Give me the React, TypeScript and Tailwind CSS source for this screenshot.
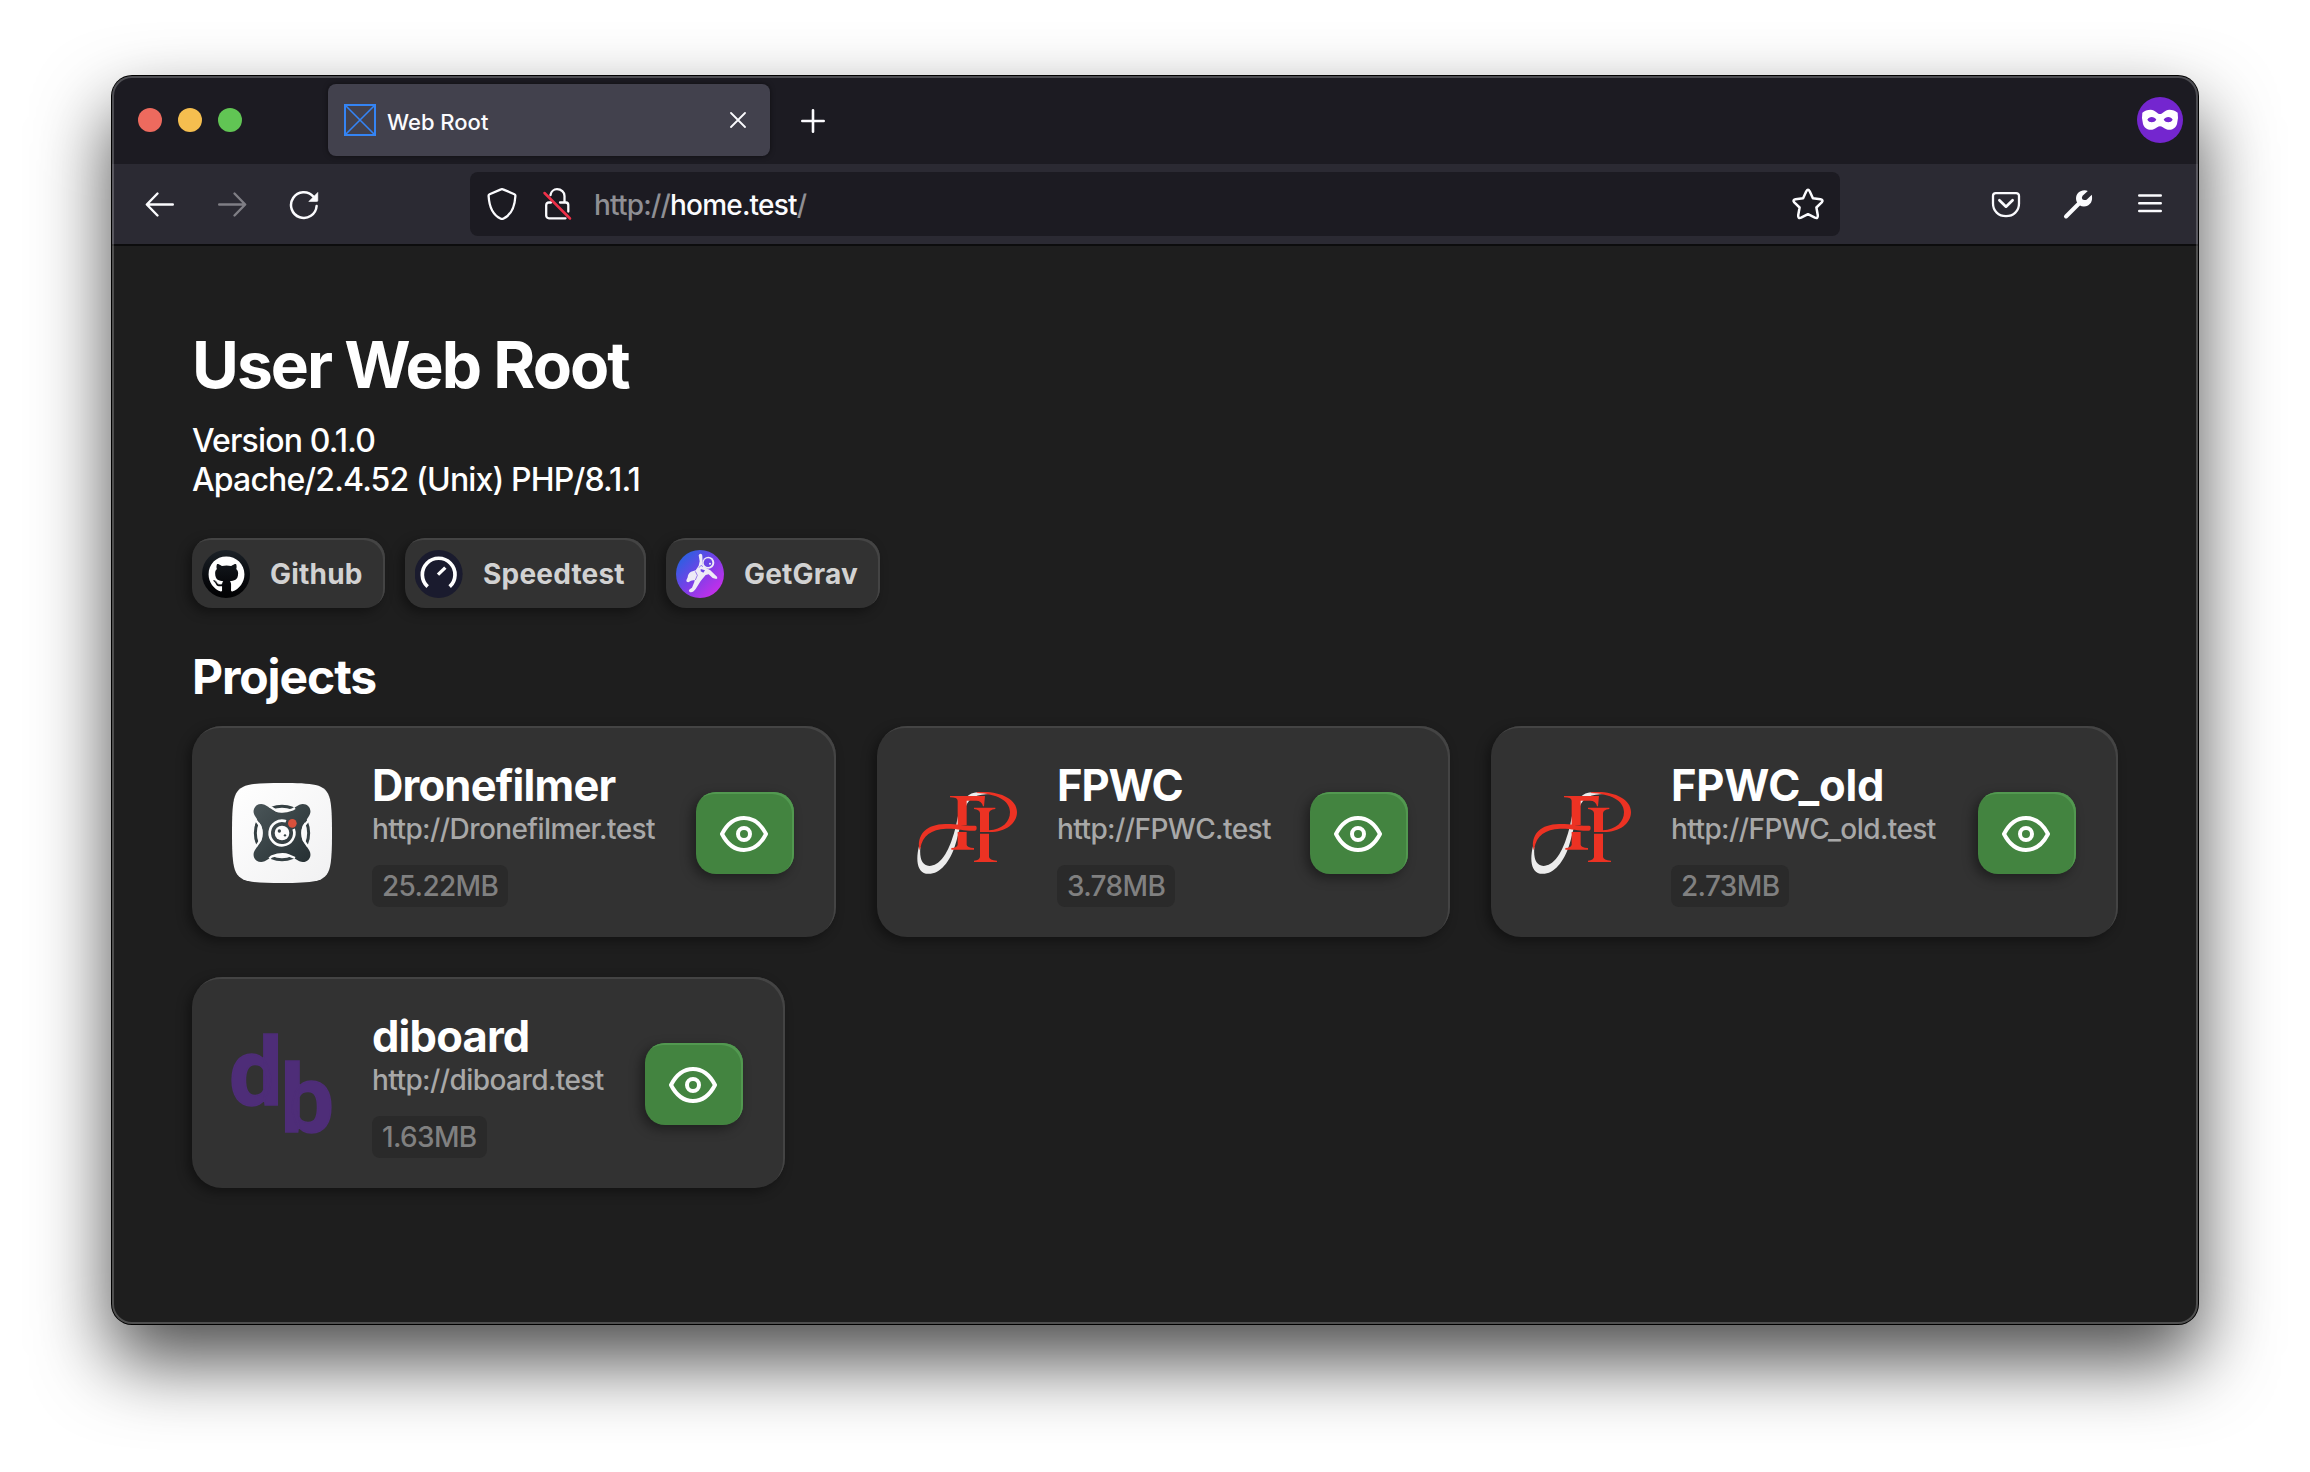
import React from "react";
import { FaGithub } from "react-icons/fa";

function BackIcon({ className = "" }: { className?: string }) {
  return (
    <svg className={className} width="32" height="32" viewBox="0 0 32 32" fill="none" stroke="currentColor" strokeWidth="2.4" strokeLinecap="round" strokeLinejoin="round">
      <path d="M28.800 16.500H3.300M13.500 5.500L2.800 16.500L13.500 27.500" />
    </svg>
  );
}

function ForwardIcon({ className = "" }: { className?: string }) {
  return (
    <svg className={className} width="32" height="32" viewBox="0 0 32 32" fill="none" stroke="currentColor" strokeWidth="2.4" strokeLinecap="round" strokeLinejoin="round">
      <path d="M3.200 16.500H28.700M18.500 5.500L29.200 16.500L18.500 27.500" />
    </svg>
  );
}

function ReloadIcon() {
  return (
    <svg width="32" height="32" viewBox="0 0 32 32" fill="none">
      <path d="M28.600 18A12.800 12.800 0 1 1 25.400 8.600" stroke="#fbfbfe" strokeWidth="2.500" strokeLinecap="round" />
      <path d="M29.800 4.400V12.500a1 1 0 0 1-1 1H20.800Z" fill="#fbfbfe" stroke="#fbfbfe" strokeWidth=".6" strokeLinejoin="round" />
    </svg>
  );
}

function ShieldIcon() {
  return (
    <svg width="32" height="34" viewBox="0 0 32 34" fill="none" stroke="#fbfbfe" strokeWidth="2.300" strokeLinejoin="round">
      <path d="M15 2.400Q16 1.900 17 2.400L28.400 7.200Q29.500 7.700 29.400 9C28.800 19 26.500 27.500 17.200 31.700Q16 32.200 14.800 31.700C5.500 27.500 3.200 19 2.600 9Q2.500 7.700 3.600 7.200Z" />
    </svg>
  );
}

function InsecureIcon() {
  return (
    <svg width="32" height="34" viewBox="0 0 32 34" fill="none" strokeWidth="2.300" strokeLinecap="round" strokeLinejoin="round">
      <path d="M8.500 8C9 4.500 12 2.200 15 2.200C19.200 2.200 22.500 5 22.500 9V15.500H24A2.500 2.500 0 0 1 26.300 18V24.500M9 15.500H7A2.800 2.800 0 0 0 4.200 18V28.500A2.800 2.800 0 0 0 7 31.300H23.500M18 15.500H22.500" stroke="#fbfbfe" />
      <path d="M2.500 6L28 31.500" stroke="#ee3048" strokeWidth="2.500" />
    </svg>
  );
}

function StarIcon() {
  return (
    <svg width="34" height="34" viewBox="0 0 34 34" fill="none" stroke="#fbfbfe" strokeWidth="2.500" strokeLinejoin="round">
      <path d="M15.300 4.300Q17 1.400 18.700 4.300L21.900 11.300L29.500 12.200Q32.800 12.900 30.700 15.400L25.400 20.500L26.800 28.300Q27.100 31.900 23.900 30.700L17 27.200L10.100 30.700Q6.900 31.900 7.200 28.300L8.600 20.500L3.300 15.400Q1.200 12.900 4.500 12.200L12.100 11.300Z" />
    </svg>
  );
}

function PocketIcon() {
  return (
    <svg width="32" height="32" viewBox="0 0 32 32" fill="none" stroke="#fbfbfe" strokeLinecap="round" strokeLinejoin="round">
      <path d="M5.800 5.100H26.200A2.800 2.800 0 0 1 29 7.900V15.500C29 23 23.500 28.200 16 28.200S3 23 3 15.500V7.900A2.800 2.800 0 0 1 5.800 5.100Z" strokeWidth="2.300" />
      <path d="M9.400 12.300L16 18.700L22.600 12.300" strokeWidth="2.700" />
    </svg>
  );
}

function WrenchIcon() {
  return (
    <svg width="32" height="32" viewBox="0 0 32 32" fill="none">
      <path d="M4 28.500L18 14.500" stroke="#fbfbfe" strokeWidth="4" strokeLinecap="round" />
      <path d="M25.800 3Q22.500 1.600 18.500 3.300C14.500 5.200 13.200 9.500 14.600 13.500C16.500 18.500 22 19.800 26 17.500C29.700 15.200 30.700 11.500 29.800 6.700L24.600 11.800Q21.600 12.600 20.300 11.300Q19.300 9.500 20.600 7.800Z" fill="#fbfbfe" />
    </svg>
  );
}

function MaskIcon() {
  return (
    <svg width="46" height="46" viewBox="1071 99 138 138">
      <circle cx="1140" cy="168" r="69" fill="#7426cf" />
      <path fillRule="evenodd" fill="#fff" d="M1087 146Q1097 137 1112 137C1126 138 1132 150 1140 150S1154 138 1168 137Q1183 137 1193 146Q1196 160 1191 180C1187 194 1172 201 1159 196C1150 192 1146 187 1140 187S1130 192 1121 196C1108 201 1093 194 1089 180Q1084 160 1087 146ZM1102 167C1107 156 1123 156 1129 167C1123 177 1107 177 1102 167ZM1151 167C1157 156 1173 156 1178 167C1173 177 1157 177 1151 167Z" />
    </svg>
  );
}

function TabBar() {
  return (
    <div className="flex h-[88px] items-center bg-[#1c1b22] pl-[26px] pr-[15px]">
      <div className="flex gap-4">
        <span className="size-6 rounded-full bg-[#ed6a5e]" />
        <span className="size-6 rounded-full bg-[#f5be4f]" />
        <span className="size-6 rounded-full bg-[#61c554]" />
      </div>
      <div className="ml-[86px] flex h-[72px] w-[442px] items-center rounded-lg bg-[#42414d] pl-4 pr-[24px] shadow-[0_0_5px_rgba(0,0,0,0.5)]">
        <svg width="32" height="32" viewBox="0 0 32 32" fill="none" stroke="#3484f4">
          <rect x="1" y="1" width="30" height="30" strokeWidth="2" />
          <path d="M2 2L30 30M30 2L2 30" strokeWidth="1.600" />
        </svg>
        <span className="ml-[11px] flex-1 pt-[3px] text-[22px] font-[480] leading-7 text-[#fbfbfe]">Web Root</span>
        <svg width="16" height="16" viewBox="0 0 16 16" stroke="#fbfbfe" strokeWidth="1.800" strokeLinecap="round">
          <path d="M1 1L15 15M15 1L1 15" />
        </svg>
      </div>
      <svg className="ml-[31px] mt-[2px]" width="24" height="24" viewBox="0 0 24 24" stroke="#fbfbfe" strokeWidth="2.600" strokeLinecap="round">
        <path d="M12 1.300V22.700M1.300 12H22.700" />
      </svg>
      <div className="ml-auto">
        <MaskIcon />
      </div>
    </div>
  );
}

function Toolbar() {
  return (
    <div className="flex h-[82px] items-center border-b-2 border-[#0c0c0d] bg-[#2b2a33] pl-[32px] pr-[35px] text-[#fbfbfe]">
      <div className="flex gap-10">
        <BackIcon />
        <ForwardIcon className="text-[#7f7e85]" />
        <ReloadIcon />
      </div>
      <div className="ml-[150px] flex h-16 w-[1370px] items-center rounded-lg bg-[#1c1b22] pl-4 pr-[15px]">
        <ShieldIcon />
        <div className="ml-[24px]">
          <InsecureIcon />
        </div>
        <span className="ml-[20px] flex-1 pt-[2px] text-[28px] font-[450] leading-9 tracking-[-0.8px] text-[#8f8f94]">
          http://<span className="text-[#fbfbfe]">home.test</span>/
        </span>
        <StarIcon />
      </div>
      <div className="ml-auto flex items-center gap-10">
        <PocketIcon />
        <WrenchIcon />
        <svg width="24" height="24" viewBox="0 0 24 24" className="ml-1 mr-px" stroke="#fbfbfe" strokeWidth="2.400" strokeLinecap="round">
          <path d="M1.200 3.500H22.800M1.200 11.300H22.800M1.200 19H22.800" />
        </svg>
      </div>
    </div>
  );
}

function GithubLogo() {
  return (
    <span className="flex size-12 items-center justify-center rounded-full bg-linear-to-b from-[#1b2127] to-[#020203]">
      <FaGithub className="size-[37px] text-white" />
    </span>
  );
}

function SpeedtestLogo() {
  return (
    <svg width="48" height="48" viewBox="706 90 144 144" fill="none" stroke="#fff">
      <circle cx="777" cy="162" r="72" fill="#1a1b2e" stroke="none" />
      <path d="M744 200A49 49 0 1 1 810 200" strokeWidth="11" />
      <path d="M775 164L797 143" strokeWidth="10" />
    </svg>
  );
}

function GravLogo() {
  return (
    <svg width="48" height="48" viewBox="408 90 144 144">
      <defs>
        <linearGradient id="grav" x1="0" y1="0.100" x2="0.900" y2="1">
          <stop offset="0" stopColor="#1b66e0" />
          <stop offset="0.500" stopColor="#7a3fe8" />
          <stop offset="1" stopColor="#d62bea" />
        </linearGradient>
      </defs>
      <circle cx="480" cy="162" r="72" fill="url(#grav)" />
      <g fill="#eeeaf6">
        <path d="M476 106Q477 101 482 101Q488 102 487 108L488 133L497 143L511 151L531 170Q534 175 529 177L518 174L506 163L497 165L482 183L467 207L461 214Q455 218 449 216Q444 213 449 208L456 203L463 186L464 180L453 182L445 187Q438 187 439 181L443 172Q444 160 453 155L467 151L476 137L479 124Z" />
        <circle cx="505" cy="128" r="18" />
      </g>
      <circle cx="504" cy="128" r="13" fill="#6c42e6" />
      <circle cx="510" cy="131" r="3" fill="#eeeaf6" />
      <path d="M482 147L495 151L490 158L482 154Z" fill="#6c42e6" />
      <path d="M466 154L472 166L466 180" fill="none" stroke="#7143e6" strokeWidth="2" />
      <path d="M477 143L483 136L489 140" fill="none" stroke="#6446e6" strokeWidth="2" />
    </svg>
  );
}

function DroneLogo() {
  return (
    <svg width="100" height="100" viewBox="156 219 300 300">
      <defs>
        <linearGradient id="tile" x1="0" y1="0" x2="1" y2="1">
          <stop offset="0" stopColor="#ffffff" />
          <stop offset="1" stopColor="#f1f1f2" />
        </linearGradient>
        <linearGradient id="body" x1="0" y1="0" x2="1" y2="1">
          <stop offset="0" stopColor="#4a5558" />
          <stop offset="1" stopColor="#263033" />
        </linearGradient>
      </defs>
      <path fill="url(#tile)" d="M306 219C350 219 385 220 407 225C432 231 444 243 450 268C455 290 456 325 456 369S455 448 450 470C444 495 432 507 407 513C385 518 350 519 306 519S227 518 205 513C180 507 168 495 162 470C157 448 156 413 156 369S157 290 162 268C168 243 180 231 205 225C227 220 262 219 306 219Z" />
      <circle cx="306" cy="369" r="80" fill="none" stroke="#354043" strokeWidth="9" />
      <path
        d="M225 318C212 298 230 275 254 284L285 302Q306 312 327 302L358 284C382 275 400 298 387 318L369 346Q360 369 369 392L387 420C400 440 382 463 358 454L327 436Q306 426 285 436L254 454C230 463 212 440 225 420L243 392Q252 369 243 346Z"
        fill="url(#body)"
      />
      <path d="M268 289L287 301Q306 310 338 298L345 294M386 331L371 349Q363 369 371 391L384 410M345 444L326 436Q306 428 274 440L268 446M228 410L241 391Q249 369 241 349L228 331" fill="none" stroke="#fcfcfc" strokeWidth="7" />
      <path d="M318 334A37 37 0 1 0 341 357" fill="none" stroke="#fcfcfc" strokeWidth="8" />
      <circle cx="306" cy="369" r="22" fill="#fcfcfc" />
      <circle cx="298" cy="363" r="5" fill="#354043" />
      <circle cx="315" cy="376" r="3.500" fill="#354043" />
      <circle cx="337" cy="340" r="13" fill="#d9513c" />
    </svg>
  );
}

function FpLogo() {
  return (
    <svg width="100" height="100" viewBox="141 219 300 300">
      <path fill="#ececec" d="M362 250C322 241 290 245 273 285C262 314 262 345 247 385C232 432 208 468 178 468C157 466 148 448 151 412L147 408C138 445 139 484 168 491C208 497 239 455 254 410C270 362 272 325 287 290C298 262 322 252 362 252Z" />
      <g fill="#ec3223">
        <path d="M240 258H345L342 289H339Q336 272 318 272H290V345H263V272Q262 262 240 262Z" />
        <path d="M263 366H290V404Q291 413 312 414V419H244V414Q262 413 263 404Z" />
        <path d="M312 293H376V297Q357 299 357 310V363H330V310Q330 299 312 297Z" />
        <path d="M330 371H357V441Q358 450 381 452V456H312V452Q329 450 330 441Z" />
        <path d="M320 247C382 240 441 264 441 306C441 342 405 367 357 366H330V361H357C396 358 420 337 420 306C419 271 381 252 320 249Z" />
        <path d="M147 411C144 372 170 343 225 342C262 341 286 349 316 347Q321 348 320 355Q320 362 315 362C286 364 265 355 228 356C184 358 157 377 151 415L149 421Z" />
      </g>
    </svg>
  );
}

function DbLogo() {
  return (
    <svg width="100" height="100" viewBox="0 0 100 100" className="overflow-visible font-[Roboto] font-bold" fill="#4e2d78" stroke="#4e2d78" strokeWidth="1.500">
      <text fontSize="95" transform="translate(-3 70.500)">d</text>
      <text fontSize="95" transform="translate(48.500 97.500)">b</text>
    </svg>
  );
}

function EyeIcon() {
  return (
    <svg className="mr-[2px]" width="48" height="36" viewBox="0 0 48 36" fill="none" stroke="#fff" strokeWidth="4" strokeLinejoin="round">
      <path d="M2 18C13 -3.300 35 -3.300 46 18C35 39.300 13 39.300 2 18Z" />
      <circle cx="24" cy="18" r="6" />
    </svg>
  );
}

type LinkChip = { label: string; icon: React.ReactNode; width: string };

const chips: LinkChip[] = [
  { label: "Github", icon: <GithubLogo />, width: "w-[193px]" },
  { label: "Speedtest", icon: <SpeedtestLogo />, width: "w-[241px]" },
  { label: "GetGrav", icon: <GravLogo />, width: "w-[214px]" },
];

type Project = { name: string; size: string; icon: React.ReactNode; width: string; tracking: string };

const projects: Project[] = [
  { name: "Dronefilmer", size: "25.22MB", icon: <DroneLogo />, width: "w-[644px]", tracking: "tracking-[-0.8px]" },
  { name: "FPWC", size: "3.78MB", icon: <FpLogo />, width: "w-[573px]", tracking: "tracking-[-1.1px]" },
  { name: "FPWC_old", size: "2.73MB", icon: <FpLogo />, width: "w-[627px]", tracking: "tracking-[-0.2px]" },
  { name: "diboard", size: "1.63MB", icon: <DbLogo />, width: "w-[593px]", tracking: "tracking-[-0.8px]" },
];

function ProjectCard({ name, size, icon, width, tracking }: Project) {
  return (
    <article
      className={`${width} flex h-[211px] shrink-0 items-center rounded-[30px] bg-[#323232] pl-10 pr-[42px] pt-[3px] shadow-[inset_-2px_2px_0_#444444,-4px_4px_12px_rgba(0,0,0,0.4)]`}
    >
      <div className="size-[100px] shrink-0">{icon}</div>
      <div className="ml-10 flex flex-1 flex-col items-start whitespace-nowrap">
        <h3 className={`${tracking} text-[43.500px] font-bold leading-[52px] text-white`}>{name}</h3>
        <a className="text-[28px] font-[450] leading-9 tracking-[-0.58px] text-[#a8a8a8]">http://{name}.test</a>
        <span className="mt-[18px] flex h-[42px] items-center rounded-lg bg-[#2a2a2a] px-[10px] text-[28px] font-[450] tracking-[-0.65px] text-[#808080]">{size}</span>
      </div>
      <button className="flex h-[82px] w-[98px] shrink-0 items-center justify-center rounded-[20px] bg-[#438440] pt-[2px] shadow-[inset_-2px_2px_0_#529850,-4px_4px_12px_rgba(0,0,0,0.4)]">
        <EyeIcon />
      </button>
    </article>
  );
}

export default function App() {
  return (
    <div className="h-[1472px] w-[2310px] overflow-hidden bg-white pl-[111px] pt-[75px] font-[Inter,sans-serif]">
      <div className="relative h-[1250px] w-[2088px] rounded-[21px] bg-black p-px shadow-[0_36px_75px_rgba(0,0,0,0.7)]">
        <div className="flex h-full flex-col overflow-hidden rounded-[20px] bg-[#1e1e1e]">
          <TabBar />
          <Toolbar />
          <main className="flex-1 px-20 pt-20 text-white">
            <h1 className="text-[64px] font-bold leading-[78px] tracking-[-1.95px]">User Web Root</h1>
            <p className="mt-[18px] text-[32px] font-[450] leading-[38.500px] tracking-[-0.85px]">
              Version 0.1.0
              <br />
              Apache/2.4.52 (Unix) PHP/8.1.1
            </p>
            <nav className="mt-[39px] flex gap-5">
              {chips.map((chip) => (
                <a
                  key={chip.label}
                  className={`${chip.width} flex h-[70px] items-center gap-[20px] rounded-[20px] bg-[#323232] pl-[10px] pt-[2px] text-[28px] font-bold tracking-[0.2px] text-[#d2d2d2] shadow-[inset_-2px_2px_0_#444444,-4px_4px_12px_rgba(0,0,0,0.4)]`}
                >
                  {chip.icon}
                  {chip.label}
                </a>
              ))}
            </nav>
            <h2 className="mt-[40px] text-[48px] font-bold leading-[58px] tracking-[-1.1px]">Projects</h2>
            <section className="-mr-4 mt-[20px] flex flex-wrap gap-x-[41px] gap-y-10">
              {projects.map((project) => (
                <ProjectCard key={project.name} {...project} />
              ))}
            </section>
          </main>
        </div>
        <div className="pointer-events-none absolute inset-px rounded-[20px] shadow-[inset_0_0_0_2px_rgba(255,255,255,0.22)]" />
      </div>
    </div>
  );
}
